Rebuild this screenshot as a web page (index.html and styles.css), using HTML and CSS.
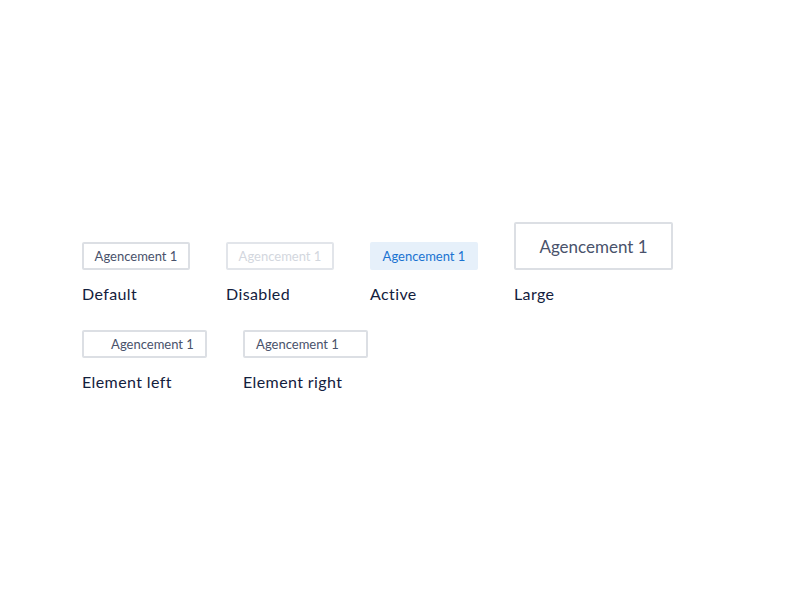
FILE: index.html
```html
<!DOCTYPE html>
<html lang="fr">
  <head>
    <meta charset="UTF-8" />
    <title>Tags</title>
    <link rel="stylesheet" href="styles.css">
  </head>
  <body>
    <div class="board">
      <div class="row row-top">
        <div class="item">
          <button class="tag">Agencement 1</button>
          <span class="label">Default</span>
        </div>
        <div class="item">
          <button class="tag tag-disabled" disabled>Agencement 1</button>
          <span class="label">Disabled</span>
        </div>
        <div class="item">
          <button class="tag tag-active">Agencement 1</button>
          <span class="label">Active</span>
        </div>
        <div class="item">
          <button class="tag tag-large">Agencement 1</button>
          <span class="label">Large</span>
        </div>
      </div>
      <div class="row">
        <div class="item">
          <button class="tag tag-left"><span class="slot"></span>Agencement 1</button>
          <span class="label">Element left</span>
        </div>
        <div class="item">
          <button class="tag tag-right">Agencement 1<span class="slot"></span></button>
          <span class="label">Element right</span>
        </div>
      </div>
    </div>
  </body>
</html>
```

FILE: styles.css
```css
body {
  margin: 0;
  background: #fff;
  font-family: Lato, "Noto Sans", sans-serif;
  color: #13203d;
}

.board {
  padding: 222px 0 0 82px;
  display: flex;
  flex-direction: column;
  gap: 25px;
}

.row {
  display: flex;
  gap: 36px;
  align-items: flex-end;
}

.item {
  display: flex;
  flex-direction: column;
  align-items: flex-start;
  gap: 13px;
}

.tag {
  box-sizing: border-box;
  height: 28px;
  width: 108px;
  padding: 0;
  display: flex;
  align-items: center;
  justify-content: center;
  border: 2px solid #dcdfe4;
  border-radius: 2px;
  background: #fff;
  font-family: inherit;
  font-size: 13px;
  color: #49526b;
}

.tag-disabled {
  color: #d3d7de;
  border-color: #e2e5ea;
}

.tag-active {
  border-color: #e6f0fa;
  background: #e6f0fa;
  color: #1a73d1;
}

.tag-large {
  width: 159px;
  height: 48px;
  font-size: 17px;
}

.tag-left,
.tag-right {
  width: 125px;
}

.slot {
  display: inline-block;
  width: 16px;
}

.label {
  font-size: 16px;
  line-height: 22px;
  letter-spacing: 0.4px;
}
```
